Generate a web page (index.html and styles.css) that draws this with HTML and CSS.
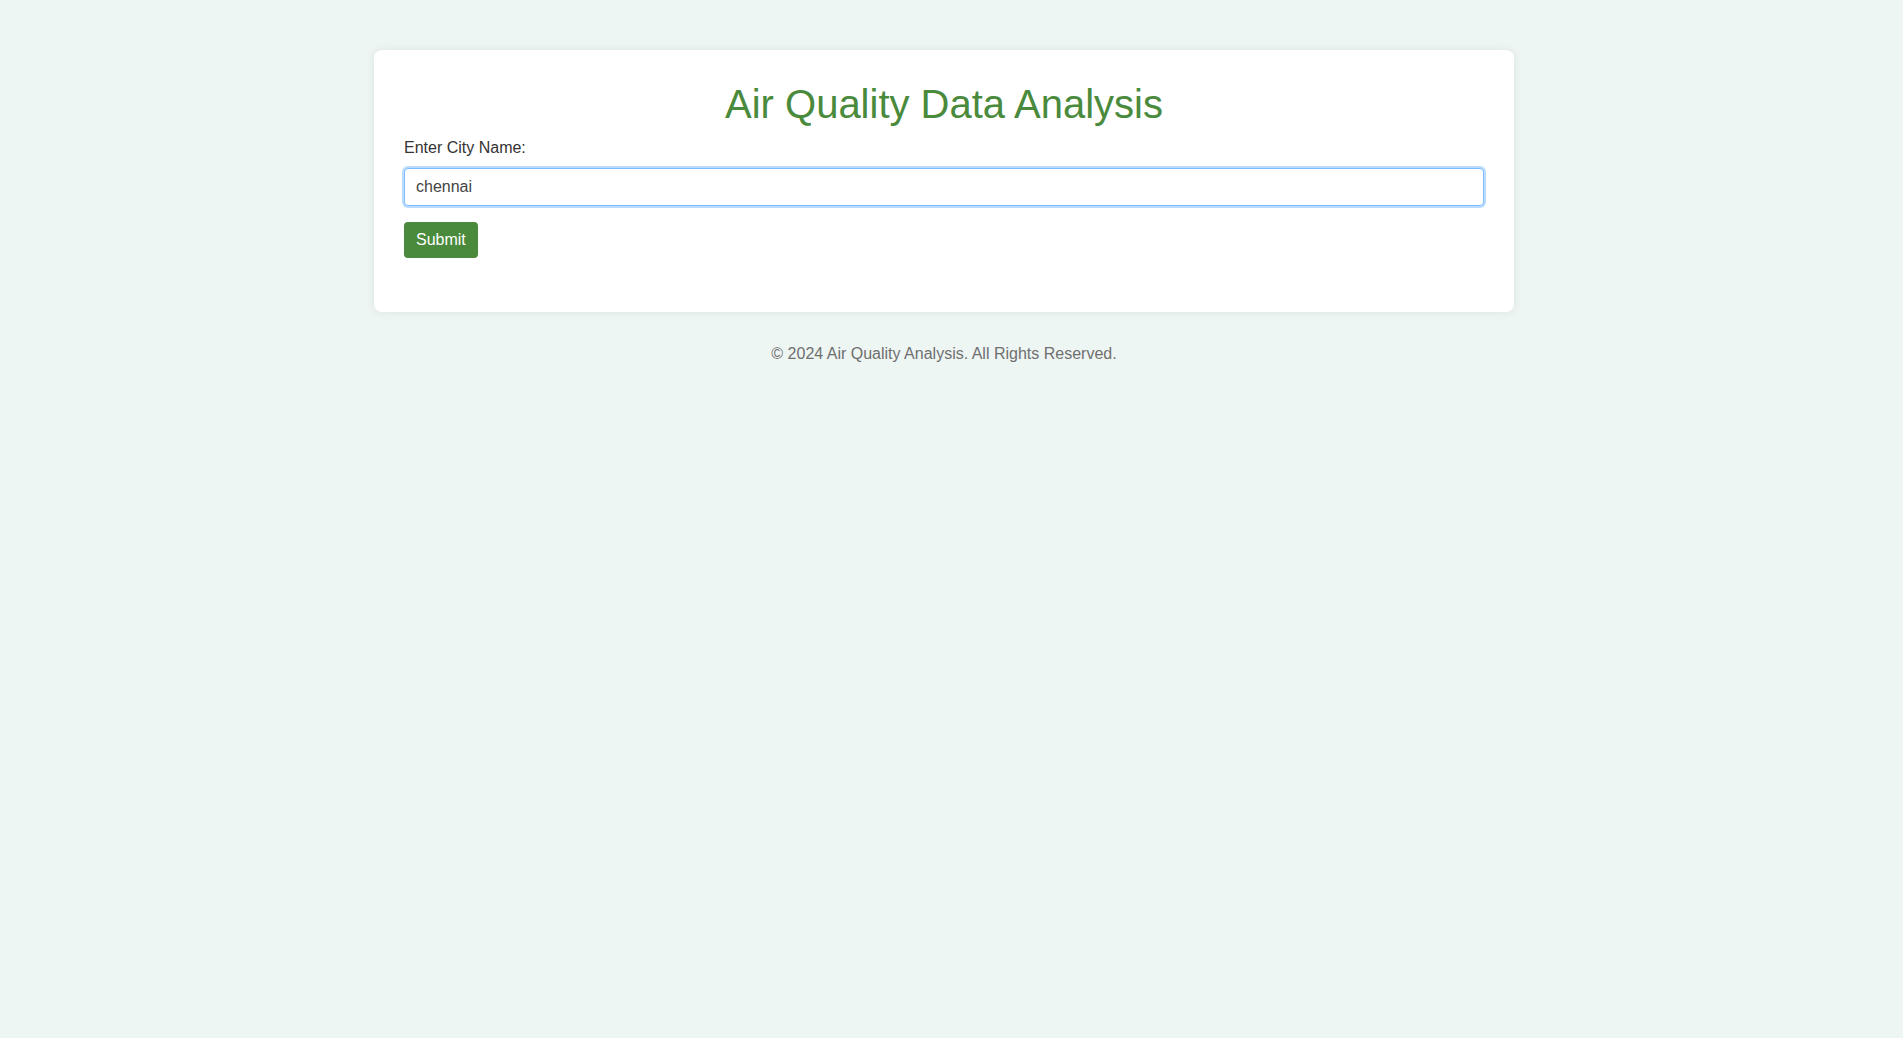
FILE: index.html
```html
<!DOCTYPE html>
<html lang="en">
<head>
<meta charset="UTF-8">
<title>Air Quality Data Analysis</title>
<link rel="stylesheet" href="styles.css">
</head>
<body>
<main class="page">
  <section class="card">
    <h1 class="title">Air Quality Data Analysis</h1>
    <form class="form" onsubmit="return false;">
      <label class="label" for="city">Enter City Name:</label>
      <input class="input" id="city" type="text" value="chennai">
      <button class="button" type="submit">Submit</button>
    </form>
  </section>
  <footer class="footer">© 2024 Air Quality Analysis. All Rights Reserved.</footer>
</main>
</body>
</html>
```

FILE: styles.css
```css
* { box-sizing: border-box; }

html, body {
  margin: 0;
  padding: 0;
  background: #eef6f4;
  font-family: "Liberation Sans", Arial, sans-serif;
}

.page {
  padding: 50px 15px 0 0;
  min-height: 1038px;
}

.card {
  width: 1140px;
  margin: 0 auto;
  background: #ffffff;
  border-radius: 8px;
  padding: 31px 30px 30px 30px;
  box-shadow: 0 0 10px rgba(0, 0, 0, 0.08);
}

.title {
  margin: 0 0 12px 0;
  text-align: center;
  font-size: 40px;
  font-weight: normal;
  color: #4a8a3c;
  line-height: 46px;
}

.form {
  display: flex;
  flex-direction: column;
  align-items: flex-start;
  padding-bottom: 24px;
}

.label {
  display: block;
  font-size: 16px;
  color: #333333;
  line-height: 18px;
  margin-bottom: 11px;
}

.input {
  width: 100%;
  height: 38px;
  padding: 0 11px;
  font-family: "Liberation Sans", Arial, sans-serif;
  font-size: 16px;
  color: #444444;
  border: 1px solid #80bdff;
  border-radius: 4px;
  box-shadow: 0 0 0 2px #bcdcff;
  outline: none;
  margin-bottom: 16px;
}

.button {
  height: 36px;
  padding: 0 12px;
  font-family: "Liberation Sans", Arial, sans-serif;
  font-size: 16px;
  color: #ffffff;
  background: #4a8a3c;
  border: none;
  border-radius: 4px;
  cursor: pointer;
}

.footer {
  margin: 0 auto;
  padding-top: 33px;
  text-align: center;
  font-size: 16px;
  line-height: 18px;
  color: #6f6f6f;
}
```
